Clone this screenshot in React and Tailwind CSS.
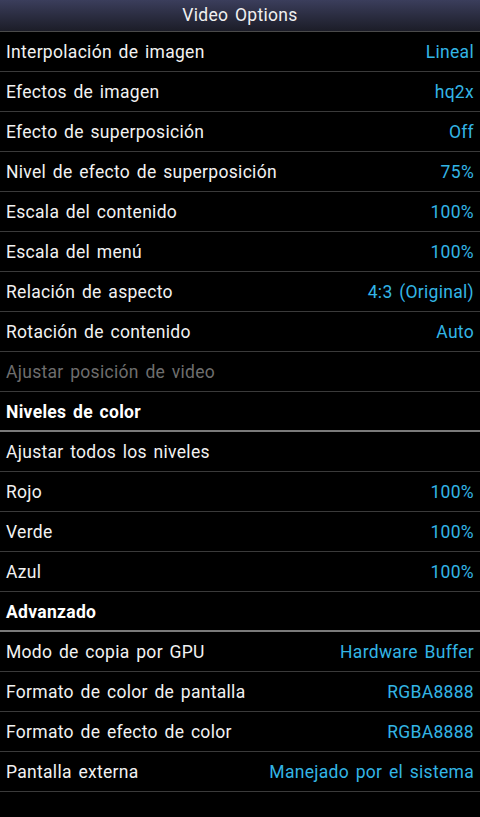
const rows = [
  { label: "Interpolación de imagen", value: "Lineal" },
  { label: "Efectos de imagen", value: "hq2x" },
  { label: "Efecto de superposición", value: "Off" },
  { label: "Nivel de efecto de superposición", value: "75%" },
  { label: "Escala del contenido", value: "100%" },
  { label: "Escala del menú", value: "100%" },
  { label: "Relación de aspecto", value: "4:3 (Original)" },
  { label: "Rotación de contenido", value: "Auto" },
  { label: "Ajustar posición de video", disabled: true },
  { label: "Niveles de color", section: true },
  { label: "Ajustar todos los niveles" },
  { label: "Rojo", value: "100%" },
  { label: "Verde", value: "100%" },
  { label: "Azul", value: "100%" },
  { label: "Advanzado", section: true },
  { label: "Modo de copia por GPU", value: "Hardware Buffer" },
  { label: "Formato de color de pantalla", value: "RGBA8888" },
  { label: "Formato de efecto de color", value: "RGBA8888" },
  { label: "Pantalla externa", value: "Manejado por el sistema" },
];

export default function App() {
  return (
    <div className="w-[480px] h-[817px] bg-black overflow-hidden font-['Roboto',sans-serif] text-[17.5px] tracking-[0.3px] [word-spacing:2px]">
      {/* Title bar */}
      <div className="h-[32px] flex items-center justify-center bg-gradient-to-b from-[#3b3e5c] to-[#1c1d28] border-b border-[#4a4a4a] text-[#f0f0f0]">
        Video Options
      </div>

      {rows.map((r, i) => (
        <div
          key={i}
          className={
            r.section
              ? "h-[40px] flex items-center justify-between px-[6px] pt-[2px] border-b-2 border-[#7a7a7a]"
              : "h-[40px] flex items-center justify-between px-[6px] pt-[2px] border-b border-[#3a3a3a]"
          }
        >
          <span
            className={
              r.section
                ? "font-bold text-white"
                : r.disabled
                ? "text-[#6e6e6e]"
                : "text-[#f2f2f2]"
            }
          >
            {r.label}
          </span>
          {r.value && <span className="text-[#33b5e5]">{r.value}</span>}
        </div>
      ))}
    </div>
  );
}
